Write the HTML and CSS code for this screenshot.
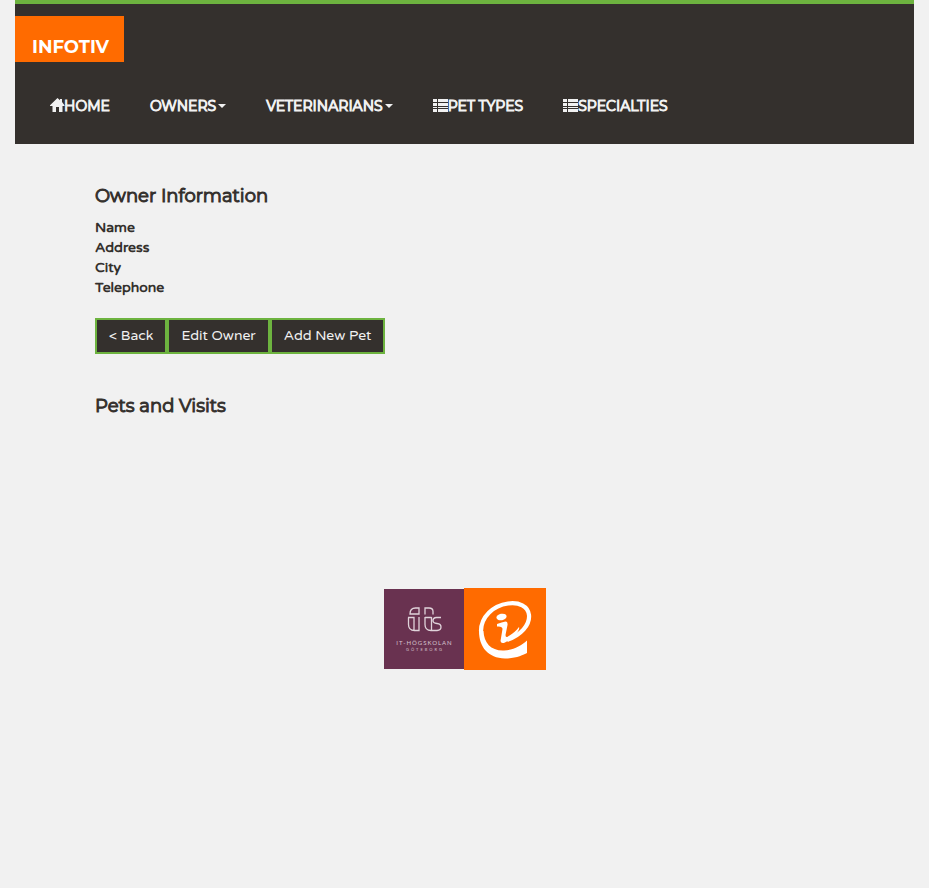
FILE: index.html
```html
<!DOCTYPE html>
<html lang="en">
<head>
<meta charset="utf-8">
<meta name="viewport" content="width=device-width, initial-scale=1">
<title>Owner Information</title>
<link rel="stylesheet" href="styles.css">
</head>
<body>
<header class="navbar">
  <a class="brand" href="#">INFOTIV</a>
  <nav>
    <ul class="menu">
      <li><a class="menu-link" href="#"><svg class="icon" viewBox="0 0 14 15" aria-hidden="true"><path d="M7.500 0 10 2.200V1h2v3L14.500 7.200V8H12.500v6H9V9H6v5H2.500V8H0V7.200z"/></svg>HOME</a></li>
      <li><a class="menu-link" href="#">OWNERS<span class="caret"></span></a></li>
      <li><a class="menu-link" href="#">VETERINARIANS<span class="caret"></span></a></li>
      <li><a class="menu-link" href="#"><svg class="icon icon-list" viewBox="0 0 15 15" aria-hidden="true"><path d="M0 1h4v3H0zM5 1h10v3H5zM0 5h4v3H0zM5 5h10v3H5zM0 9h4v1H0zM5 9h10v1H5zM0 11h4v3H0zM5 11h10v3H5z"/></svg>PET TYPES</a></li>
      <li><a class="menu-link" href="#"><svg class="icon icon-list" viewBox="0 0 15 15" aria-hidden="true"><path d="M0 1h4v3H0zM5 1h10v3H5zM0 5h4v3H0zM5 5h10v3H5zM0 9h4v1H0zM5 9h10v1H5zM0 11h4v3H0zM5 11h10v3H5z"/></svg>SPECIALTIES</a></li>
    </ul>
  </nav>
</header>
<main class="content">
  <h2>Owner Information</h2>
  <table class="details">
    <tbody>
      <tr><th scope="row">Name</th><td></td></tr>
      <tr><th scope="row">Address</th><td></td></tr>
      <tr><th scope="row">City</th><td></td></tr>
      <tr><th scope="row">Telephone</th><td></td></tr>
    </tbody>
  </table>
  <div class="actions">
    <button type="button">&lt; Back</button>
    <button type="button">Edit Owner</button>
    <button type="button">Add New Pet</button>
  </div>
  <h2>Pets and Visits</h2>
</main>
<footer class="footer">
  <svg class="logo-school" viewBox="0 0 80 80" role="img" aria-label="IT-Högskolan Göteborg">
    <rect width="80" height="80" fill="#693250"/>
    <g fill="none" stroke="#e0d3da" stroke-width="1.300">
      <path d="M26 25c0-4 2.500-6 5.500-6H35v6zM41 25.500V19h4q4 0 4 3.500v3M24 28.500h6v13M35 28v13.500h-4.500q-6 0-6-6v-7M41 28v7.500q0 6 6 6h6q4-.3 4-3.500t-4-3.500q-4-.3-4-3t3.500-3H57M47.500 28v13.500M41 28.500h6.500"/>
    </g>
    <text class="school-name" x="40.500" y="56" text-anchor="middle">IT-HÖGSKOLAN</text>
    <text class="school-city" x="41" y="62" text-anchor="middle">GÖTEBORG</text>
  </svg>
  <svg class="logo-at" viewBox="0 0 82 82" role="img" aria-label="Infotiv">
    <rect width="82" height="82" fill="#ff6b00"/>
    <path fill="none" stroke="#fff" stroke-width="4.200" d="M43 52C57 47 66 37 65 27 64 18 55 14 44 15.500 29 17.500 17 29 17 43"/>
    <path fill="#fff" d="M15 43C15 59 24 70 41 70.500 52 70.500 59 67 63 65V52.500C57 58 49 62 40 62.500 27 63 20 55 19.500 43z"/>
    <ellipse cx="37.500" cy="29" rx="5.200" ry="3.200" fill="#fff" transform="rotate(-12 37.500 29)"/>
    <path fill="#fff" d="M33 36Q38 34 41.500 33.500 44 33.500 43.500 37L41.500 47Q41.500 50 44 48.500 51 44.500 55 39 56 41 52 46 48 51 41 54.500 37 56 36.500 53L38.500 41Q38.500 38 33 38.500z"/>
  </svg>
</footer>
</body>
</html>
```
FILE: styles.css
```css
* {
  box-sizing: border-box;
}

body {
  margin: 0;
  padding: 0 15px;
  background: #f1f1f1;
  color: #34302d;
  font-family: "Varela Round", Inter, sans-serif;
  font-size: 14px;
  line-height: 20px;
}

.navbar {
  padding: 12px 0 18px;
  border-top: 4px solid #6db33f;
  background: #34302d;
}

.brand {
  display: block;
  width: 109px;
  height: 46px;
  padding: 20px 0 0 17px;
  background: #ff6b00;
  color: #fff;
  font: 700 18px/22px Montserrat, Lato, sans-serif;
  text-decoration: none;
}

.menu {
  display: flex;
  flex-wrap: wrap;
  margin: 14px 0 0;
  padding: 0 15px;
  list-style: none;
}

.menu-link {
  display: flex;
  align-items: center;
  padding: 20px 20px 10px;
  color: #f1f1f1;
  font-family: Montserrat, Inter, sans-serif;
  font-weight: 400;
  -webkit-text-stroke: 1px currentColor;
  text-decoration: none;
}

.icon {
  width: 14px;
  height: 15px;
  margin-bottom: 1px;
  overflow: visible;
  fill: currentColor;
}

.icon-list {
  width: 15px;
}

.caret {
  margin-left: 2px;
  border-top: 4px solid;
  border-right: 4px solid transparent;
  border-left: 4px solid transparent;
}

.content {
  padding: 42px 80px 0;
}

h2 {
  margin: 0 0 12px;
  font-family: Montserrat, Inter, sans-serif;
  font-size: 18px;
  font-weight: 400;
  line-height: 20px;
  -webkit-text-stroke: 1px currentColor;
}

.details {
  width: 100%;
  border-collapse: collapse;
}

.details th {
  padding: 0;
  font-weight: 700;
  text-align: left;
}

.details td {
  padding: 0;
}

.actions {
  display: flex;
  flex-wrap: wrap;
  margin: 20px 0 42px;
}

button {
  padding: 6px 12px;
  border: 2px solid #6db33f;
  background: #34302d;
  color: #f1f1f1;
  font: inherit;
}

.footer {
  display: flex;
  align-items: center;
  justify-content: center;
  margin: 172px 0;
}

.logo-school {
  width: 80px;
  height: 80px;
}

.logo-at {
  width: 82px;
  height: 82px;
}

.school-name,
.school-city {
  fill: #d6c4ce;
  font-family: Lato, sans-serif;
}

.school-name {
  font-size: 6px;
  letter-spacing: 1px;
}

.school-city {
  font-size: 4px;
  letter-spacing: 2px;
}
```
